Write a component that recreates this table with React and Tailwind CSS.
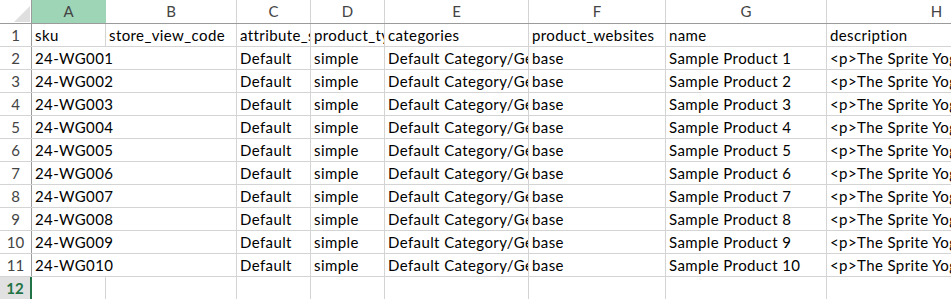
const COLS = [
  { key: 'A', w: 'w-[74px]' },
  { key: 'B', w: 'w-[131px]' },
  { key: 'C', w: 'w-[74px]' },
  { key: 'D', w: 'w-[74px]' },
  { key: 'E', w: 'w-[144px]' },
  { key: 'F', w: 'w-[137px]' },
  { key: 'G', w: 'w-[161px]' },
  { key: 'H', w: 'w-[220px]' },
]

const HEAD = ['sku', 'store_view_code', 'attribute_set_code', 'product_type', 'categories', 'product_websites', 'name', 'description']

const rows = Array.from({ length: 10 }, (_, i) => [
  `24-WG${String(i + 1).padStart(3, '0')}`,
  '',
  'Default',
  'simple',
  'Default Category/Gear/Bags',
  'base',
  `Sample Product ${i + 1}`,
  '<p>The Sprite Yoga Straps is your best friend',
])

function Corner() {
  return (
    <div className="w-[32px] shrink-0 h-full border-r border-[#9b9b9b] relative">
      <svg className="absolute left-[14px] top-[6px]" width="16" height="16" viewBox="0 0 16 16">
        <polygon points="16,0 16,16 0,16" fill="#dfdfdf" />
      </svg>
    </div>
  )
}

function RowHead({ n, selected }) {
  if (selected) {
    return (
      <div className="w-[32px] shrink-0 h-full flex items-center justify-center bg-[#e1e1e1] border-r-2 border-[#217346] text-[#217346] font-bold text-[15px]">
        {n}
      </div>
    )
  }
  return (
    <div className="w-[32px] shrink-0 h-full flex items-center justify-center border-r border-[#9b9b9b] text-[#444] text-[15px]">
      {n}
    </div>
  )
}

export default function App() {
  return (
    <div className="w-[951px] h-[299px] overflow-hidden bg-white text-black" style={{ fontFamily: 'Lato, "Open Sans", sans-serif' }}>
      <div className="flex h-[24px] border-b border-[#9b9b9b]">
        <Corner />
        {COLS.map((c) => (
          <div
            key={c.key}
            className={`${c.w} shrink-0 h-full flex items-center justify-center text-[15px] text-[#444] border-r ${c.key === 'A' ? 'bg-[#9fd5b7] border-[#9fd5b7]' : 'border-[#d4d4d4]'}`}
          >
            {c.key}
          </div>
        ))}
      </div>

      {[HEAD, ...rows].map((r, ri) => (
        <div key={ri} className="flex h-[23px] border-b border-[#d4d4d4]">
          <RowHead n={ri + 1} />
          {COLS.map((c, ci) => {
            const overflow = ci === 0 && r[1] === ''
            return (
              <div
                key={c.key}
                className={`${c.w} shrink-0 h-full flex items-end pb-[1px] pl-[3px] text-[15px] leading-[20px] tracking-[0.4px] whitespace-nowrap border-r ${overflow ? 'overflow-visible border-transparent' : 'overflow-hidden border-[#d4d4d4]'}`}
              >
                {r[ci]}
              </div>
            )
          })}
        </div>
      ))}

      <div className="flex h-[23px] border-b border-[#d4d4d4]">
        <RowHead n={12} selected />
        {COLS.map((c) => (
          <div key={c.key} className={`${c.w} shrink-0 h-full border-r border-[#d4d4d4]`} />
        ))}
      </div>
    </div>
  )
}
